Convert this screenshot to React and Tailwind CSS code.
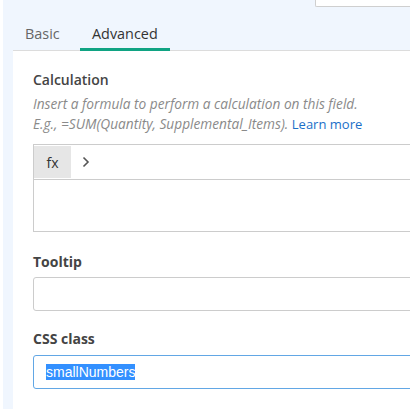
import React from 'react';

const font = { fontFamily: '"Open Sans", "Noto Sans", sans-serif' };

function Label({ children, bold }) {
  return (
    <div className={`text-[14px] leading-[20px] text-[#444] ${bold ? 'font-bold' : 'font-semibold'}`}>
      {children}
    </div>
  );
}

export default function App() {
  return (
    <div className="w-[410px] h-[409px] overflow-hidden flex bg-white" style={font}>
      <div className="w-[3px] shrink-0 bg-white" />
      <div className="flex-1 flex flex-col bg-[#f0f6fe] pl-[10px] min-w-0">
        <div className="h-[7px] ml-[302px] w-[200px] shrink-0 bg-white border-l border-b border-[#cfcfcf] rounded-bl-[2px]" />

        <div className="h-[44px] shrink-0 flex items-end border-b border-[#dcdcdc] w-[500px]">
          <button className="-mb-px w-[67px] pl-3 text-left pb-1 border-b-[3px] border-transparent text-[14.4px] leading-[20px] text-[#666]">
            Basic
          </button>
          <button className="-mb-px w-[90px] pl-3 text-left pb-1 border-b-[3px] border-[#10a383] text-[14.4px] leading-[20px] text-[#333]">
            Advanced
          </button>
        </div>

        <div className="flex-1 bg-white w-[500px] pl-[20px] pt-[19px]">
          <Label>Calculation</Label>
          <p className="mt-[4px] text-[13.7px] leading-[20px] italic text-[#8a8a8a]">
            Insert a formula to perform a calculation on this field.
            <br />
            E.g., =SUM(Quantity, Supplemental_Items).{' '}
            <a className="not-italic text-[13px] text-[#1b6fc8]" href="#">Learn more</a>
          </p>

          <div className="mt-[10px] w-[420px] h-[88px] border border-[#cccccc] flex flex-col">
            <div className="h-[35px] shrink-0 flex items-stretch border-b border-[#cccccc] p-px pl-0">
              <div className="w-[37px] bg-[#e6e6e6] flex items-center justify-center text-[14px] text-[#333]">
                fx
              </div>
              <div className="flex items-center pl-[11px]">
                <svg width="8" height="12" viewBox="0 0 8 12" fill="none">
                  <path d="M1.5 1.5 L6 6 L1.5 10.5" stroke="#555" strokeWidth="1.6" />
                </svg>
              </div>
            </div>
            <div className="flex-1" />
          </div>

          <div className="mt-[20px]">
            <Label bold>Tooltip</Label>
            <div className="mt-[5px] w-[420px] h-[34px] border border-[#cccccc] rounded-[3px]" />
          </div>

          <div className="mt-[18px]">
            <Label bold>CSS class</Label>
            <div className="mt-[6px] w-[420px] h-[34px] border border-[#62a7e5] rounded-[3px] flex items-center pl-[12px]">
              <span
                className="bg-[#3390ff] text-white text-[14px] leading-[16px]"
                style={{ fontFamily: '"Liberation Sans", Arial, sans-serif' }}
              >
                smallNumbers
              </span>
            </div>
          </div>
        </div>
      </div>
    </div>
  );
}
